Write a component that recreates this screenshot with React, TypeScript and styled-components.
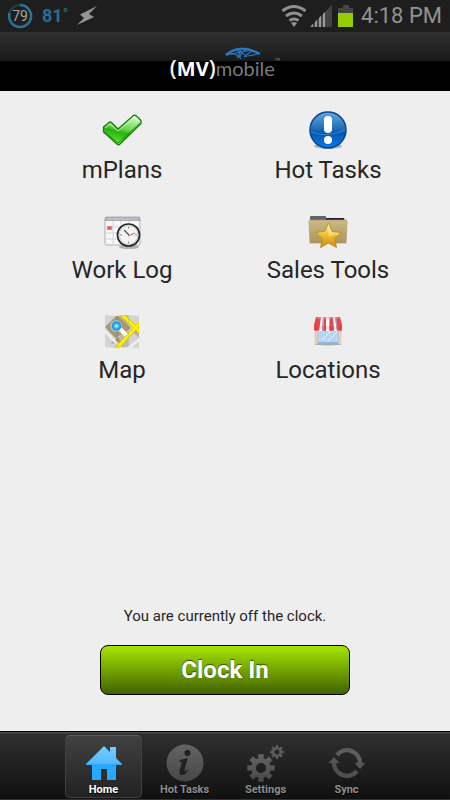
import React from 'react';
import styled, { createGlobalStyle } from 'styled-components';

const GlobalStyle = createGlobalStyle`
  * { box-sizing: border-box; }
  body { margin: 0; background: #eee; font-family: Roboto, "Liberation Sans", sans-serif; }
  button, a { font-family: inherit; }
`;

const Screen = styled.div`
  display: flex;
  flex-direction: column;
  min-height: 100vh;
  background: #eee;
`;

const StatusBar = styled.div`
  display: flex;
  align-items: center;
  justify-content: space-between;
  height: 32px;
  padding: 0 8px 0 6px;
  background: #1e1e1e;
`;

const StatusGroup = styled.div<{ $gap: number }>`
  display: flex;
  align-items: center;
  gap: ${(p) => p.$gap}px;
`;

const Gauge = styled.div`
  display: grid;
  place-items: center;
  width: 28px;
  height: 28px;
  color: #a5a5a5;
  font-size: 14px;
  > * { grid-area: 1 / 1; }
`;

const Temperature = styled.span`
  display: flex;
  color: #286f8c;
  font-family: "Liberation Sans Narrow", Roboto, sans-serif;
  font-size: 18px;
  line-height: 20px;
  font-weight: 700;
`;

const Degree = styled.span`
  font-size: 14px;
  line-height: 16px;
`;

const Clock = styled.time`
  padding-left: 3px;
  color: #929292;
  font-size: 22px;
  line-height: 32px;
`;

const Header = styled.header`
  display: flex;
  justify-content: center;
  height: 59px;
  background: linear-gradient(#303030 0%, #1a1a1a 49%, #000 50%, #000 100%);
`;

const Logo = styled.h1`
  position: relative;
  display: flex;
  align-items: baseline;
  margin: 20px 0 0;
  font-family: "Open Sans", sans-serif;
  font-size: 20px;
  line-height: 30px;
  font-weight: 400;
  color: #7a7a7a;
`;

const Paren = styled.span`
  color: #f4f4f4;
  font-size: 22px;
  font-weight: 600;
`;

const LogoStrong = styled.span`
  color: #fff;
  font-weight: 700;
`;

const LogoLight = styled.span`
  font-family: Lato, sans-serif;
`;

const Trade = styled.span`
  align-self: flex-start;
  font-size: 7px;
  line-height: 18px;
`;

const LogoSwoosh = styled.svg`
  position: absolute;
  top: -6px;
  right: 18px;
`;

const Main = styled.main`
  display: flex;
  flex: 1;
  flex-direction: column;
  justify-content: space-between;
  padding: 14px 19px 36px;
`;

const Menu = styled.nav`
  display: grid;
  grid-template-columns: 1fr 1fr;
  grid-auto-rows: 100px;
`;

const MenuItem = styled.a`
  display: flex;
  flex-direction: column;
  align-items: center;
  gap: 4px;
  color: #262626;
  font-size: 24px;
  line-height: 32px;
  text-decoration: none;
`;

const IconSlot = styled.span`
  display: flex;
  align-items: flex-end;
  height: 45px;
`;

const ClockPanel = styled.section`
  display: flex;
  flex-direction: column;
  align-items: center;
  gap: 19px;
`;

const StatusText = styled.p`
  margin: 0;
  color: #262626;
  font-size: 15px;
  line-height: 20px;
`;

const ClockButton = styled.button`
  width: 250px;
  max-width: 100%;
  height: 50px;
  border: 1px solid #000;
  border-radius: 8px;
  background: linear-gradient(#a6e600, #416100);
  color: #fff;
  font-size: 24px;
  font-weight: 700;
  text-shadow: 0 -1px 1px rgba(0, 0, 0, 0.6);
  cursor: pointer;
`;

const TabBar = styled.nav`
  display: flex;
  justify-content: center;
  gap: 4px;
  height: 69px;
  padding: 3px 8px 1px;
  border-top: 1px solid #000;
  border-bottom: 1px solid #333;
  background: linear-gradient(#484848 0, #484848 1px, #303030 2px, #101010 100%);
`;

const Tab = styled.a<{ $active?: boolean }>`
  display: flex;
  flex-direction: column;
  align-items: center;
  width: 77px;
  height: 63px;
  padding-top: 6px;
  border: 1px solid ${(p) => (p.$active ? '#414141' : 'transparent')};
  border-top-color: ${(p) => (p.$active ? '#5b5b5b' : 'transparent')};
  border-radius: 5px;
  background: ${(p) => (p.$active ? 'linear-gradient(#414141, #222)' : 'none')};
  color: ${(p) => (p.$active ? '#fff' : '#8e8e8e')};
  font-size: 11px;
  line-height: 14px;
  font-weight: 700;
  text-decoration: none;
  text-shadow: 0 1px 1px #000;
`;

const TabIcon = styled.span`
  display: flex;
  align-items: center;
  height: 41px;
`;

function gearPath(cx: number, cy: number, outer: number, inner: number, hole: number) {
  const points: string[] = [];
  for (let i = 0; i < 8; i += 1) {
    const angle = (i * Math.PI) / 4;
    const corners: [number, number][] = [[-0.26, inner], [-0.2, outer], [0.2, outer], [0.26, inner]];
    corners.forEach(([offset, r]) => {
      points.push(`${(cx + r * Math.sin(angle + offset)).toFixed(2)} ${(cy - r * Math.cos(angle + offset)).toFixed(2)}`);
    });
  }
  return `M${points.join('L')}ZM${cx - hole} ${cy}a${hole} ${hole} 0 1 0 ${hole * 2} 0a${hole} ${hole} 0 1 0 ${-hole * 2} 0Z`;
}

const CheckIcon = () => (
  <svg width="40" height="36" viewBox="0 0 40 36" aria-hidden="true">
    <defs>
      <linearGradient id="check" x1="0.7" y1="0" x2="0.35" y2="1">
        <stop offset="0" stopColor="#d9f6d0" /><stop offset=".45" stopColor="#6ed64b" /><stop offset=".6" stopColor="#27b40e" /><stop offset="1" stopColor="#6de83c" />
      </linearGradient>
    </defs>
    <path d="M1.500 13 7 8.500Q8.500 7.500 9.500 8.500L16 15 31.500 1.500Q33 .8 34.500 2L39 6.500V9.500L18 30Q16.500 31.500 15 30L1.500 18Z" fill="url(#check)" stroke="#16800c" strokeWidth="1.300" strokeLinejoin="round" />
    <path d="m3 14 5-4 8 7L32 3l5 4" fill="none" stroke="#e3ffdc" strokeWidth="1" opacity=".75" />
    <path d="m3 18 13 11 22-20" fill="none" stroke="#098306" strokeWidth="1" opacity=".7" />
  </svg>
);

const AlertIcon = () => (
  <svg width="40" height="40" viewBox="0 0 40 40" aria-hidden="true">
    <defs>
      <linearGradient id="alert" x1="0" y1="0" x2="0" y2="1">
        <stop offset="0" stopColor="#69a9dc" /><stop offset=".5" stopColor="#1768b5" /><stop offset=".58" stopColor="#0757ae" /><stop offset="1" stopColor="#087bed" />
      </linearGradient>
    </defs>
    <ellipse cx="20" cy="36" rx="14" ry="3" fill="#777" opacity=".5" />
    <circle cx="20" cy="20" r="18" fill="url(#alert)" stroke="#07478f" strokeWidth="1.500" />
    <path d="M3 22Q20 28 37 20" fill="none" stroke="#5a9dd7" opacity=".6" />
    <rect x="16" y="6" width="8" height="17" rx="4" fill="#fff" />
    <circle cx="20" cy="30" r="4" fill="#fff" />
  </svg>
);

const WorkLogIcon = () => (
  <svg width="37" height="34" viewBox="0 0 37 34" aria-hidden="true">
    <ellipse cx="25" cy="31" rx="10" ry="2" fill="#777" opacity=".5" />
    <rect x="1" y="1" width="35" height="28" rx="1.500" fill="#f8f8fa" stroke="#aeb0ba" />
    <path d="M1 1h35v4H1z" fill="#aaabb4" /><path d="M3 3h31" stroke="#d1d2d8" />
    <path d="M1 11h34M1 17h34M1 23h34M9 5v23M17 5v23M25 5v23" stroke="#d3d4de" />
    <rect x="3" y="10" width="5" height="4" fill="#f78478" /><path d="M4 12h3" stroke="#d52318" />
    <circle cx="24.500" cy="19" r="11" fill="#f4f4f4" stroke="#252525" strokeWidth="1.700" />
    <circle cx="24.500" cy="19" r="9.300" fill="none" stroke="#ccc" />
    <path d="M24.500 10.500v2M24.500 25.500v2M16 19h2M31 19h2" stroke="#888" />
    <path d="m20 14 5 5" stroke="#555" strokeWidth="1.200" /><path d="m24 20 7-3" stroke="#cd6659" />
  </svg>
);

const FolderIcon = () => (
  <svg width="40" height="36" viewBox="0 0 40 36" aria-hidden="true">
    <defs>
      <linearGradient id="folder" x1="0" y1="0" x2="0" y2="1"><stop offset="0" stopColor="#ccb985" /><stop offset="1" stopColor="#ad965b" /></linearGradient>
      <linearGradient id="star" x1="0" y1="0" x2="0" y2="1"><stop offset="0" stopColor="#fff3b0" /><stop offset=".5" stopColor="#edbd31" /><stop offset="1" stopColor="#c88a0b" /></linearGradient>
    </defs>
    <path d="M2 5V3.500Q2 2 4 2h12q2 0 2 2h18l1 3v22H3Z" fill="#202030" />
    <path d="M4 2h12q2 0 2 2v2H2V4q0-2 2-2" fill="#62626a" />
    <path d="M1 7Q1 6 3 6h34q2 0 2 1l-1 22H2Z" fill="url(#folder)" stroke="#a8976b" strokeWidth=".7" />
    <path d="m20.500 9 3.800 8.400 9.200 1-6.900 6.200 1.900 9-8-4.600-8 4.600 1.900-9-6.900-6.200 9.200-1z" fill="url(#star)" stroke="#b98717" strokeWidth=".8" />
    <path d="m20.500 11 3 7.500 8 1-11 3z" fill="#fff6bd" opacity=".45" />
  </svg>
);

const MapIcon = () => (
  <svg width="36" height="36" viewBox="0 0 36 36" aria-hidden="true">
    <defs>
      <clipPath id="map-clip"><path d="m1 1 12 1 11-1 11 1v32l-11-1-11 1-12-1z" /></clipPath>
      <radialGradient id="pin"><stop offset="0" stopColor="#d7ffff" /><stop offset=".35" stopColor="#62cfff" /><stop offset="1" stopColor="#057bd9" /></radialGradient>
    </defs>
    <g clipPath="url(#map-clip)">
      <path d="M0 0h36v36H0z" fill="#d3d3cf" /><path d="M12 0h12v36H12z" fill="#bdb9ad" />
      <path d="m1 13 12-12 14 13-16 10zM7 29l7-6 5 8z" fill="#ab9575" />
      <path d="M28 17 36 11v14z" fill="#b5b1a8" />
      <path d="m0 16 19 20M36 25 22 36" stroke="#eee" strokeWidth="3" />
      <path d="m16 15 7 7" stroke="#fff" strokeWidth="4" />
      <path d="M17 0 36 18M36 9 11 36" fill="none" stroke="#cdbb00" strokeWidth="4" />
      <path d="M17 0 36 18M36 9 11 36" fill="none" stroke="#fff000" strokeWidth="3" />
      <path d="M12 0h2v36h-2zM24 0h1v36h-1z" fill="#555" opacity=".12" />
    </g>
    <circle cx="12" cy="12" r="6" fill="#8be8ed" opacity=".6" /><circle cx="12.500" cy="12" r="4.500" fill="url(#pin)" />
  </svg>
);

const StoreIcon = () => (
  <svg width="30" height="34" viewBox="0 0 30 34" aria-hidden="true">
    <ellipse cx="15" cy="28" rx="14" ry="1.500" fill="#aaa" />
    <path d="M3 13h24v15H3z" fill="#91b6e0" /><path d="M5 15h20v11H5z" fill="#b9d4ef" />
    <path d="m9 24 9-9m-3 10 9-9" stroke="#e9f5ff" /><path d="M3 14v14M27 14v14" stroke="#e2d2bd" strokeWidth="3" />
    <path d="M3 1h24l2 8v5q-2 2-4 0-3 2-5 0-3 2-5 0-3 2-5 0-3 2-5 0-2 2-4 0V9Z" fill="#e4474c" />
    <path d="M8 1h2L9 15H6ZM13 1h3v14h-3ZM20 1h2l2 14h-3Z" fill="#fff" />
    <path d="M10 1h1v14H9ZM16 1h1v14h-1ZM22 1h1l2 14h-1Z" fill="#9aa9cf" />
    <path d="M2 10h26v4H2z" fill="#a7222a" opacity=".15" /><path d="M4 2h22" stroke="#ff9d9d" />
  </svg>
);

const HomeIcon = () => (
  <svg width="38" height="34" viewBox="0 0 38 34" aria-hidden="true">
    <defs><linearGradient id="home" x1="0" y1="0" x2="0" y2="1"><stop offset="0" stopColor="#78cbff" /><stop offset=".5" stopColor="#55bbff" /><stop offset=".55" stopColor="#28a8ff" /><stop offset="1" stopColor="#28a8ff" /></linearGradient></defs>
    <path d="M19 0 25 6V1h6v11l6 6v1h-6v15h-9V23h-6v11H7V19H1v-1Z" fill="url(#home)" />
  </svg>
);

const InfoIcon = () => (
  <svg width="38" height="38" viewBox="0 0 38 38" aria-hidden="true">
    <defs><linearGradient id="info" x1="0" y1="0" x2="0" y2="1"><stop offset="0" stopColor="#646464" /><stop offset="1" stopColor="#474747" /></linearGradient></defs>
    <circle cx="19" cy="19" r="18.500" fill="url(#info)" /><circle cx="21.500" cy="9" r="3" fill="#202020" />
    <path d="M14 16q4-1 8-2-2 6-3.500 12c-.5 2 1 1.500 4-1.500q-2 6-6 6.500-4 0-3-4l2.500-9h-3Z" fill="#202020" />
  </svg>
);

const SettingsIcon = () => (
  <svg width="40" height="38" viewBox="0 0 40 38" aria-hidden="true">
    <defs><linearGradient id="gear" x1="0" y1="0" x2="0" y2="1"><stop offset="0" stopColor="#646464" /><stop offset="1" stopColor="#474747" /></linearGradient></defs>
    <path d={gearPath(15, 24, 14, 10, 5)} fill="url(#gear)" fillRule="evenodd" />
    <path d={gearPath(31, 8, 7, 5, 2.5)} fill="#5c5c5c" fillRule="evenodd" />
  </svg>
);

const SyncIcon = () => (
  <svg width="38" height="32" viewBox="0 0 38 32" aria-hidden="true">
    <path d="M9 8A13 13 0 0 1 32 17" fill="none" stroke="#5c5c5c" strokeWidth="4.500" />
    <path d="M29 24A13 13 0 0 1 6 15" fill="none" stroke="#505050" strokeWidth="4.500" />
    <path d="M26.500 16h11L32 22ZM.5 16h11L6 10Z" fill="#565656" />
  </svg>
);

const menu = [
  { label: 'mPlans', icon: <CheckIcon /> },
  { label: 'Hot Tasks', icon: <AlertIcon /> },
  { label: 'Work Log', icon: <WorkLogIcon /> },
  { label: 'Sales Tools', icon: <FolderIcon /> },
  { label: 'Map', icon: <MapIcon /> },
  { label: 'Locations', icon: <StoreIcon /> },
];

const tabs = [
  { label: 'Home', icon: <HomeIcon />, active: true },
  { label: 'Hot Tasks', icon: <InfoIcon /> },
  { label: 'Settings', icon: <SettingsIcon /> },
  { label: 'Sync', icon: <SyncIcon /> },
];

export default function App() {
  return (
    <Screen>
      <GlobalStyle />
      <StatusBar>
        <StatusGroup $gap={8}>
          <Gauge>
            <svg width="26" height="26" viewBox="0 0 26 26" aria-hidden="true">
              <circle cx="13" cy="13" r="11" fill="none" stroke="#1d414f" strokeWidth="2" />
              <path d="M13 2a11 11 0 1 1-10.500 8" fill="none" stroke="#287493" strokeWidth="2.500" />
            </svg>
            <span>79</span>
          </Gauge>
          <Temperature>81<Degree>°</Degree></Temperature>
          <svg width="22" height="22" viewBox="0 0 22 22" aria-hidden="true">
            <path d="M21 1 4 9.500l4 3.500-7 7 17-8-5-3z" fill="#959595" />
          </svg>
        </StatusGroup>
        <StatusGroup $gap={3}>
          <svg width="26" height="22" viewBox="0 0 26 22" aria-hidden="true">
            <g fill="none" stroke="#8f8f8f" strokeWidth="3"><path d="M1.500 6Q13-3 24.500 6M5 11q8-6 16 0M8.500 15.500q4.500-3 9 0" /></g>
            <path d="m10 18 3 4 3-4q-3-2-6 0" fill="#8f8f8f" />
          </svg>
          <svg width="23" height="22" viewBox="0 0 23 22" aria-hidden="true">
            <path d="M22 0v22H0z" fill="#444" /><path d="M1 22v-1l2-2v3zM5 22v-5l2-2v7zM9 22v-9l2-2v11zM13 22V9l2-2v15z" fill="#999" />
          </svg>
          <svg width="19" height="24" viewBox="0 0 19 24" aria-hidden="true">
            <path d="M7 1h6v3h4v6H2V4h5z" fill="#444" /><path d="M2 9h15v14H2z" fill="#94ce00" />
          </svg>
          <Clock>4:18 PM</Clock>
        </StatusGroup>
      </StatusBar>
      <Header>
        <Logo>
          <Paren>(</Paren><LogoStrong>MV</LogoStrong><Paren>)</Paren><LogoLight>mobile</LogoLight><Trade>™</Trade>
          <LogoSwoosh width="37" height="15" viewBox="0 0 37 15" aria-hidden="true">
            <g fill="none" stroke="#2878c2" strokeWidth="1.200">
              <path d="M1 9Q15-3 35 8" strokeWidth="2.500" /><path d="M1 9q9-4 15 4m-7-9q8 1 13 7M15 2q1 6-3 10M22 2q-8 7-7 10M27 4Q16 6 1 9m22 1q8-1 12-3M28 4l-9 7" />
            </g>
          </LogoSwoosh>
        </Logo>
      </Header>
      <Main>
        <Menu aria-label="Main menu">
          {menu.map((item) => (
            <MenuItem href="#" key={item.label}><IconSlot>{item.icon}</IconSlot>{item.label}</MenuItem>
          ))}
        </Menu>
        <ClockPanel>
          <StatusText>You are currently off the clock.</StatusText>
          <ClockButton type="button">Clock In</ClockButton>
        </ClockPanel>
      </Main>
      <TabBar aria-label="Sections">
        {tabs.map((tab) => (
          <Tab href="#" key={tab.label} $active={tab.active}><TabIcon>{tab.icon}</TabIcon>{tab.label}</Tab>
        ))}
      </TabBar>
    </Screen>
  );
}
